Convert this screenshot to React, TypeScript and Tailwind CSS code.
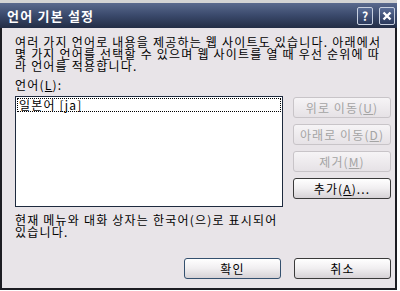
import React from "react";

const font = { fontFamily: '"Noto Sans CJK KR", "Noto Sans", sans-serif' };

function Btn({
  label,
  disabled,
  def,
  className = "",
}: {
  label: React.ReactNode;
  disabled?: boolean;
  def?: boolean;
  className?: string;
}) {
  const base =
    "flex items-center justify-center rounded-[3px] border text-[12px] leading-[12px] tracking-[1.1px] h-[21px]";
  const style = disabled
    ? "border-[#c8c4c8] bg-gradient-to-b from-[#f6f4f6] to-[#e6e2e6] text-[#a4a4a4]"
    : def
    ? "border-[#34506e] bg-gradient-to-b from-[#ffffff] via-[#f0eef0] to-[#d6d2d6] text-black"
    : "border-[#3a3a3a] bg-gradient-to-b from-[#ffffff] via-[#f0eef0] to-[#d6d2d6] text-black";
  return <div className={`${base} ${style} ${className}`}>{label}</div>;
}

export default function App() {
  return (
    <div className="w-[400px] h-[291px] bg-white overflow-hidden" style={font}>
      <div className="h-[3px] bg-[#d4d4d4] w-[397px]" />
      <div className="w-[397px] h-[287px] flex flex-col border-l-2 border-r-2 border-b-2 border-[#1c1c22] bg-[#e8e4e8]">
        {/* title bar */}
        <div className="h-[25px] flex items-center justify-between pl-[5px] pr-[2px] bg-gradient-to-b from-[#5a6a8e] via-[#3a496b] to-[#232d45] -mx-[2px]">
          <span className="text-white font-bold text-[13px] leading-[13px] tracking-[1.2px] pl-[2px]">
            언어 기본 설정
          </span>
          <div className="flex gap-[6px] items-center">
            <div className="w-[16px] h-[18px] rounded-[2px] border border-[#c8d0e0] bg-gradient-to-b from-[#5a6d96] to-[#2c3a5c] flex items-center justify-center text-white font-bold text-[12px] leading-none">
              ?
            </div>
            <div className="w-[16px] h-[18px] rounded-[2px] border border-[#c8d0e0] bg-gradient-to-b from-[#5a6d96] to-[#2c3a5c] flex items-center justify-center">
              <svg width="10" height="10" viewBox="0 0 10 10">
                <path d="M1.5 1.5 L8.5 8.5 M8.5 1.5 L1.5 8.5" stroke="white" strokeWidth="2.4" />
              </svg>
            </div>
          </div>
        </div>
        {/* body */}
        <div className="flex flex-col pl-[13px] text-[12px] leading-[12px] tracking-[1.2px] text-black">
          <div className="mt-[8px]">
            <div>여러 가지 언어로 내용을 제공하는 웹 사이트도 있습니다. 아래에서</div>
            <div>몇 가지 언어를 선택할 수 있으며 웹 사이트를 열 때 우선 순위에 따</div>
            <div>라 언어를 적용합니다.</div>
          </div>
          <div className="mt-[7px]">
            언어(<span className="underline">L</span>):
          </div>
          <div className="flex mt-[5px]">
            <div className="w-[268px] h-[111px] border border-[#1e2a3e] bg-white p-[1px]">
              <div className="h-[14px] border border-dotted border-black flex items-center pl-[1px]">
                일본어 [ja]
              </div>
            </div>
            <div className="flex flex-col gap-[6px] ml-[10px] mt-[1px]">
              <Btn disabled className="w-[98px]" label={<span>위로 이동(<span className="underline">U</span>)</span>} />
              <Btn disabled className="w-[98px]" label={<span>아래로 이동(<span className="underline">D</span>)</span>} />
              <Btn disabled className="w-[98px]" label={<span>제거(<span className="underline">M</span>)</span>} />
              <Btn className="w-[98px]" label={<span>추가(<span className="underline">A</span>)...</span>} />
            </div>
          </div>
          <div className="mt-[7px]">
            <div>현재 메뉴와 대화 상자는 한국어(으)로 표시되어</div>
            <div>있습니다.</div>
          </div>
          <div className="flex justify-end gap-[13px] mt-[20px] pr-[4px]">
            <Btn def className="w-[97px]" label="확인" />
            <Btn className="w-[97px]" label="취소" />
          </div>
        </div>
      </div>
    </div>
  );
}
